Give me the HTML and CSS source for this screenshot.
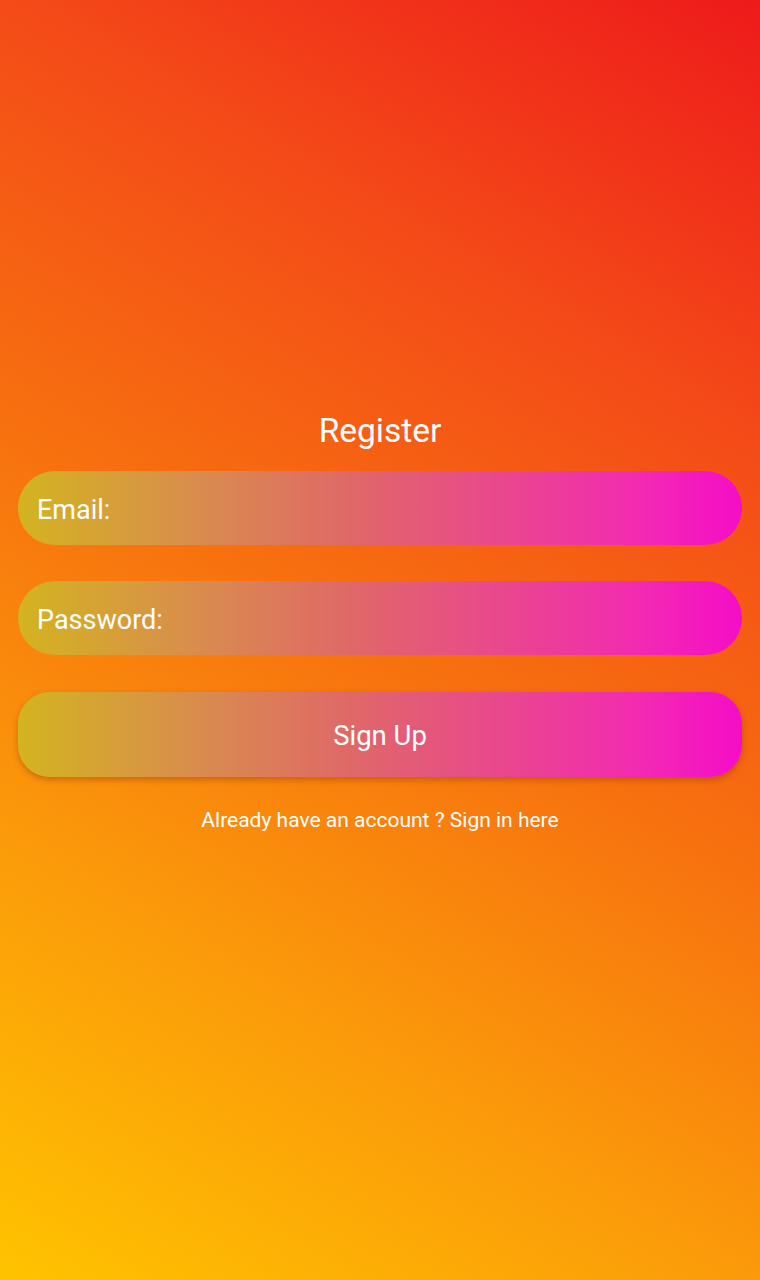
FILE: index.html
```html
<!DOCTYPE html>
<html>
<head>
<meta charset="utf-8">
<link rel="stylesheet" href="styles.css">
</head>
<body>
<main class="screen">
  <section class="form">
    <h1 class="title">Register</h1>
    <div class="field"><span class="label">Email:</span></div>
    <div class="field"><span class="label">Password:</span></div>
    <button class="btn">Sign Up</button>
    <p class="link">Already have an account ? Sign in here</p>
  </section>
</main>
</body>
</html>
```
FILE: styles.css
```css
html, body {
  margin: 0;
  padding: 0;
}
body {
  font-family: Roboto, "Liberation Sans", sans-serif;
  color: #fff;
}
.screen {
  width: 760px;
  height: 1280px;
  background: linear-gradient(30.7deg, #ffc300 0%, #fb9a0a 26%, #f7700f 50%, #f44b18 74%, #ee1a1b 100%);
  box-sizing: border-box;
  padding: 411px 18px 0;
}
.form {
  display: flex;
  flex-direction: column;
}
.title {
  margin: 0;
  font-weight: 400;
  font-size: 33.5px;
  line-height: 40px;
  text-align: center;
  height: 40px;
}
.field {
  margin-top: 20px;
  height: 74px;
  box-sizing: border-box;
  padding: 3px 0 0 19px;
  border-radius: 37px;
  background: linear-gradient(to right, #d3b420 0%, #d98c4e 25%, #df6a66 45%, #e84a8a 65%, #f22cb0 85%, #f50dc8 100%);
  display: flex;
  align-items: center;
}
.field + .field {
  margin-top: 36px;
}
.label {
  font-size: 27px;
}
.btn {
  margin-top: 37px;
  height: 85px;
  border: none;
  border-radius: 32px;
  background: linear-gradient(to right, #d3b420 0%, #d98c4e 25%, #df6a66 45%, #e84a8a 65%, #f22cb0 85%, #f50dc8 100%);
  box-shadow: 0 3px 6px rgba(120, 40, 0, 0.35);
  color: #fff;
  font-family: Roboto, "Liberation Sans", sans-serif;
  font-size: 27.5px;
  padding: 2px 0 0;
}
.link {
  margin: 30px 0 0;
  text-align: center;
  font-size: 21px;
  line-height: 26px;
}
```
